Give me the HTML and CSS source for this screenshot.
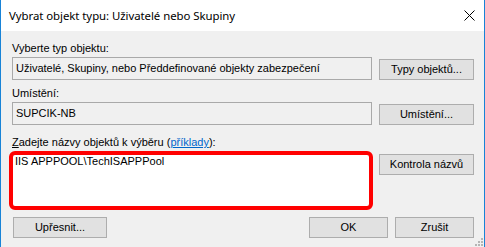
FILE: index.html
```html
<!DOCTYPE html>
<html lang="cs">
<head>
<meta charset="utf-8">
<title>Vybrat objekt typu</title>
<link rel="stylesheet" href="styles.css">
</head>
<body>
<div class="window">
  <div class="titlebar">
    <span class="title">Vybrat objekt typu: Uživatelé nebo Skupiny</span>
    <svg class="close" width="11" height="11" viewBox="0 0 11 11"><path d="M0.5 0.5 L10.5 10.5 M10.5 0.5 L0.5 10.5" stroke="#000" stroke-width="1" fill="none"/></svg>
  </div>
  <div class="content">
    <div class="label">Vyberte typ objektu:</div>
    <div class="row row-first">
      <div class="field">Uživatelé, Skupiny, nebo Předdefinované objekty zabezpečení</div>
      <button class="btn btn-side">Typy objektů...</button>
    </div>
    <div class="label">Umístění:</div>
    <div class="row row-second">
      <div class="field">SUPCIK-NB</div>
      <button class="btn btn-side">Umístění...</button>
    </div>
    <div class="label"><span class="u">Z</span>adejte názvy objektů k výběru (<a class="link" href="#">příklady</a>):</div>
    <div class="row row-names">
      <div class="names">IIS APPPOOL\TechISAPPPool</div>
      <button class="btn btn-check">Kontrola názvů</button>
    </div>
    <div class="footer">
      <button class="btn btn-advanced">Upřesnit...</button>
      <div class="spacer"></div>
      <button class="btn btn-dialog">OK</button>
      <button class="btn btn-dialog">Zrušit</button>
    </div>
  </div>
  <svg class="grip" width="9" height="9" viewBox="0 0 9 9">
    <rect x="7" y="1" width="2" height="2" fill="#b5b5b5"/>
    <rect x="4" y="4" width="2" height="2" fill="#b5b5b5"/>
    <rect x="7" y="4" width="2" height="2" fill="#b5b5b5"/>
    <rect x="1" y="7" width="2" height="2" fill="#b5b5b5"/>
    <rect x="4" y="7" width="2" height="2" fill="#b5b5b5"/>
    <rect x="7" y="7" width="2" height="2" fill="#b5b5b5"/>
  </svg>
</div>
</body>
</html>
```

FILE: styles.css
```css
* {
  box-sizing: border-box;
}

html, body {
  margin: 0;
  padding: 0;
  background: #f0f0f0;
}

.window {
  position: relative;
  width: 485px;
  height: 247px;
  background: #f0f0f0;
  border-left: 1px solid #1883d7;
  border-right: 1px solid #1883d7;
  overflow: hidden;
  font-family: "Liberation Sans", Arial, sans-serif;
  font-size: 11px;
  color: #000;
}

.titlebar {
  height: 31px;
  background: #ffffff;
  display: flex;
  align-items: center;
  padding-left: 8px;
  padding-right: 9px;
}

.title {
  flex: 1;
  font-family: "Noto Sans", "Open Sans", sans-serif;
  font-size: 11.4px;
  color: #000;
  letter-spacing: -0.05px;
}

.close {
  display: block;
  margin-top: -1px;
}

.content {
  padding: 11px 10px 0 11px;
}

.label {
  height: 13px;
  line-height: 13px;
  margin-bottom: 2px;
  white-space: nowrap;
}

.u {
  text-decoration: underline;
}

.link {
  color: #0066cc;
  text-decoration: underline;
}

.row {
  display: grid;
  grid-template-columns: 360px 95px;
  column-gap: 7px;
  align-items: start;
}

.row-first {
  margin-bottom: 7px;
}

.row-second {
  margin-bottom: 11px;
}

.field {
  height: 23px;
  line-height: 21px;
  border: 1px solid #a9a9a9;
  background: #f0f0f0;
  padding: 0 3px;
  white-space: nowrap;
  overflow: hidden;
}

.btn {
  display: block;
  height: 21px;
  margin: 0;
  padding: 0;
  border: 1px solid #adadad;
  background: #e1e1e1;
  font-family: "Liberation Sans", Arial, sans-serif;
  font-size: 11px;
  color: #000;
  line-height: 19px;
  text-align: center;
}

.btn-side {
  margin-top: 2px;
}

.row-names {
  margin-bottom: 7px;
}

.names {
  width: 364px;
  height: 59px;
  margin-left: -3px;
  border: 4px solid #ff0000;
  border-radius: 6px;
  background: #ffffff;
  padding: 0 2px;
  line-height: 13px;
  white-space: nowrap;
}

.btn-check {
  margin-top: 3px;
  width: 95px;
}

.footer {
  display: flex;
  gap: 7px;
}

.btn-advanced {
  width: 94px;
  margin-left: 1px;
}

.spacer {
  flex: 1;
}

.btn-dialog {
  width: 79px;
}

.grip {
  position: absolute;
  right: 1px;
  bottom: 1px;
}
```
